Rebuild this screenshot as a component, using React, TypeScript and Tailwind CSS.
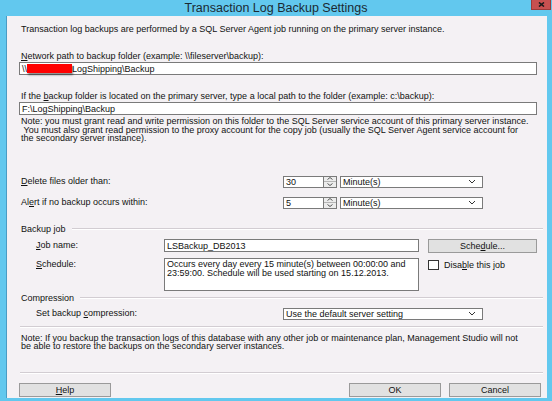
import React from "react";

const U = ({ children }: { children: React.ReactNode }) => (
  <span className="underline underline-offset-[1px]">{children}</span>
);

const Chevron = () => (
  <svg width="8" height="5" viewBox="0 0 8 5" className="shrink-0">
    <path d="M1 1 L4 4 L7 1" fill="none" stroke="#333" strokeWidth="1" />
  </svg>
);

const Combo = ({ text, w }: { text: string; w: string }) => (
  <div className={`${w} h-[12px] bg-white border border-[#7a7a7a] flex items-center justify-between pl-[2px] pr-[6px]`}>
    <span className="leading-[10px]">{text}</span>
    <Chevron />
  </div>
);

const Spin = ({ value }: { value: string }) => (
  <div className="flex items-center h-[12px]">
    <div className="w-[40px] h-[12px] bg-white border border-[#7a7a7a] border-r-0 flex items-center pl-[2px] leading-[10px]">
      {value}
    </div>
    <div className="w-[14px] h-[12px] bg-white border border-[#7a7a7a] flex flex-col">
      <div className="flex-1 bg-[#ececec] border-b border-[#b5b5b5] flex items-center justify-center">
        <svg width="6" height="3" viewBox="0 0 6 3"><path d="M0.5 2.5 L3 0.5 L5.5 2.5" fill="none" stroke="#444" strokeWidth="0.9" /></svg>
      </div>
      <div className="flex-1 bg-[#ececec] flex items-center justify-center">
        <svg width="6" height="3" viewBox="0 0 6 3"><path d="M0.5 0.5 L3 2.5 L5.5 0.5" fill="none" stroke="#444" strokeWidth="0.9" /></svg>
      </div>
    </div>
  </div>
);

const Btn = ({ children, w = "w-[92px]" }: { children: React.ReactNode; w?: string }) => (
  <div className={`${w} h-[14px] bg-[#e1e1e1] border border-[#9a9a9a] flex items-center justify-center leading-[10px]`}>
    {children}
  </div>
);

const Sep = ({ className = "" }: { className?: string }) => (
  <div className={`h-[2px] border-t border-[#d2cdd2] border-b border-b-white ${className}`} />
);

export default function App() {
  return (
    <div
      className="w-[552px] h-[401px] bg-[#62c8ee] flex flex-col text-[9px] text-[#111] overflow-hidden"
      style={{ fontFamily: '"Liberation Sans", Arial, sans-serif' }}
    >
      {/* Title bar */}
      <div className="h-[16px] grid grid-cols-[1fr_auto_1fr] items-start">
        <div />
        <div className="text-[12.5px] leading-[16px] text-[#1b2a33]">Transaction Log Backup Settings</div>
        <div className="flex justify-end pr-[1px]">
          <div className="w-[20px] h-[10px] bg-[#c75050] border border-[#9c3a3a] border-t-0 flex items-center justify-center">
            <svg width="7" height="5" viewBox="0 0 7 5"><path d="M1 0.5 L6 4.5 M6 0.5 L1 4.5" stroke="#1a1a1a" strokeWidth="1.6" /></svg>
          </div>
        </div>
      </div>

      {/* Body */}
      <div className="flex-1 ml-[6px] mr-[5px] mb-[3px] border-l border-[#4a9cc4] bg-[#f4f1f4] flex flex-col pt-[7px] pl-[12px] pr-[10px]">
        <div className="h-[12px] leading-[12px] ml-[2px]">
          Transaction log backups are performed by a SQL Server Agent job running on the primary server instance.
        </div>

        <div className="mt-[15px] h-[12px] leading-[12px] ml-[2px]">
          <U>N</U>etwork path to backup folder (example: \\fileserver\backup):
        </div>
        <div className="h-[13px] bg-white border border-[#7a7a7a] flex items-center pl-[2px] leading-[10px]">
          <span>\\</span>
          <span className="inline-block w-[45px] h-[9px] bg-[#ff0000] shadow-[1px_2px_2px_rgba(0,0,0,0.45)]" />
          <span>LogShipping\Backup</span>
        </div>

        <div className="mt-[16px] h-[11px] leading-[11px] ml-[2px]">
          If the <U>b</U>ackup folder is located on the primary server, type a local path to the folder (example: c:\backup):
        </div>
        <div className="h-[13px] bg-white border border-[#7a7a7a] flex items-center pl-[2px] leading-[10px]">
          F:\LogShipping\Backup
        </div>

        <div className="mt-[2px] leading-[8.5px] ml-[2px]">
          <div>Note: you must grant read and write permission on this folder to the SQL Server service account of this primary server instance.</div>
          <div>&nbsp;You must also grant read permission to the proxy account for the copy job (usually the SQL Server Agent service account for</div>
          <div>the secondary server instance).</div>
        </div>

        <div className="mt-[33px] flex items-center h-[12px]">
          <div className="w-[264px] ml-[2px] -mr-[2px]"><U>D</U>elete files older than:</div>
          <Spin value="30" />
          <div className="ml-[3px]"><Combo text="Minute(s)" w="w-[143px]" /></div>
        </div>
        <div className="mt-[9px] flex items-center h-[12px]">
          <div className="w-[264px] ml-[2px] -mr-[2px]">Al<U>e</U>rt if no backup occurs within:</div>
          <Spin value="5" />
          <div className="ml-[3px]"><Combo text="Minute(s)" w="w-[143px]" /></div>
        </div>

        <div className="mt-[14px] h-[12px] flex items-center -mr-[6px]">
          <span className="ml-[2px] mr-[6px] leading-[12px]">Backup job</span>
          <Sep className="flex-1" />
        </div>

        <div className="mt-[4px] flex items-center h-[14px]">
          <div className="w-[145px] pl-[17px]"><U>J</U>ob name:</div>
          <div className="w-[255px] h-[13px] bg-white border border-[#7a7a7a] flex items-center pl-[2px] leading-[10px]">
            LSBackup_DB2013
          </div>
          <div className="ml-[9px]"><Btn w="w-[109px]">Sche<U>d</U>ule...</Btn></div>
        </div>

        <div className="mt-[5px] flex items-start h-[33px]">
          <div className="w-[145px] pl-[17px] leading-[12px]"><U>S</U>chedule:</div>
          <div className="w-[255px] h-[33px] bg-white border border-[#7a7a7a] pl-[2px] pt-[1px] leading-[9px]">
            Occurs every day every 15 minute(s) between 00:00:00 and 23:59:00. Schedule will be used starting on 15.12.2013.
          </div>
          <div className="ml-[9px] mt-[2px] flex items-center">
            <div className="w-[11px] h-[10px] bg-white border border-[#333]" />
            <span className="ml-[5px] leading-[10px]">Disa<U>b</U>le this job</span>
          </div>
        </div>

        <div className="mt-[1px] h-[12px] flex items-center -mr-[6px]">
          <span className="ml-[2px] mr-[6px] leading-[12px]">Compression</span>
          <Sep className="flex-1" />
        </div>

        <div className="mt-[4px] flex items-center h-[12px]">
          <div className="w-[264px] pl-[17px]">Set backup <U>c</U>ompression:</div>
          <Combo text="Use the default server setting" w="w-[200px]" />
        </div>

        <Sep className="mt-[6px] ml-[1px] -mr-[6px]" />

        <div className="mt-[6px] leading-[8.5px] ml-[2px]">
          <div>Note: If you backup the transaction logs of this database with any other job or maintenance plan, Management Studio will not</div>
          <div>be able to restore the backups on the secondary server instances.</div>
        </div>

        <Sep className="mt-[21px] ml-[1px] -mr-[6px]" />

        <div className="mt-[9px] flex items-center justify-between -mr-[4px]">
          <Btn><U>H</U>elp</Btn>
          <div className="flex gap-[8px]">
            <Btn>OK</Btn>
            <Btn>Cancel</Btn>
          </div>
        </div>
      </div>
    </div>
  );
}
